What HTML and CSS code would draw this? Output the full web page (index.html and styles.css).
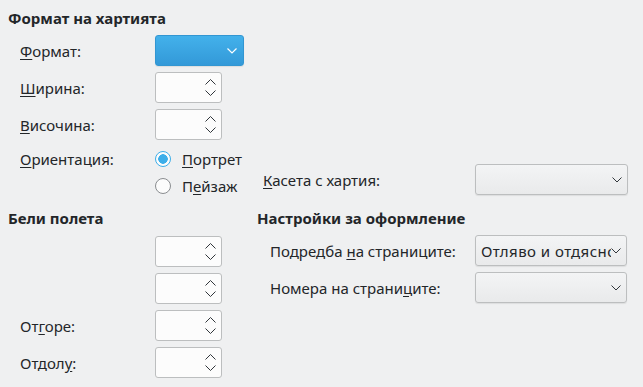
FILE: index.html
```html
<!DOCTYPE html>
<html lang="bg">
<head>
<meta charset="utf-8">
<link rel="stylesheet" href="styles.css">
</head>
<body>
<div class="page">
  <div class="sec-title">Формат на хартията</div>
  <div class="top">
    <div class="form">
      <div class="row">
        <span class="label"><u>Ф</u>ормат:</span>
        <div class="combo blue"><svg class="chev" width="10" height="6" viewBox="0 0 10 6"><path d="M0.5 0.5 L5 5 L9.5 0.5" fill="none" stroke="#fff" stroke-width="1.2"/></svg></div>
      </div>
      <div class="row">
        <span class="label"><u>Ш</u>ирина:</span>
        <div class="spin"><svg width="11" height="17" viewBox="0 0 11 17"><path d="M0.5 5.5 L5.5 0.5 L10.5 5.5 M0.5 11.5 L5.5 16.5 L10.5 11.5" fill="none" stroke="#31363b" stroke-width="1"/></svg></div>
      </div>
      <div class="row">
        <span class="label"><u>В</u>исочина:</span>
        <div class="spin"><svg width="11" height="17" viewBox="0 0 11 17"><path d="M0.5 5.5 L5.5 0.5 L10.5 5.5 M0.5 11.5 L5.5 16.5 L10.5 11.5" fill="none" stroke="#31363b" stroke-width="1"/></svg></div>
      </div>
      <div class="rrow first">
        <span class="label"><u>О</u>риентация:</span>
        <span class="radio checked"></span><span class="rlabel"><u>П</u>ортрет</span>
      </div>
      <div class="rrow">
        <span class="label"></span>
        <span class="radio"></span><span class="rlabel">П<u>е</u>йзаж</span>
      </div>
    </div>
    <div class="tray">
      <span class="tlabel"><u>К</u>асета с хартия:</span>
      <div class="combo"><svg class="chev" width="10" height="6" viewBox="0 0 10 6"><path d="M0.5 0.5 L5 5 L9.5 0.5" fill="none" stroke="#31363b" stroke-width="1"/></svg></div>
    </div>
  </div>
  <div class="bottom">
    <div class="margins">
      <div class="sec-title">Бели полета</div>
      <div class="mrows">
        <div class="row">
          <span class="label"></span>
          <div class="spin"><svg width="11" height="17" viewBox="0 0 11 17"><path d="M0.5 5.5 L5.5 0.5 L10.5 5.5 M0.5 11.5 L5.5 16.5 L10.5 11.5" fill="none" stroke="#31363b" stroke-width="1"/></svg></div>
        </div>
        <div class="row">
          <span class="label"></span>
          <div class="spin"><svg width="11" height="17" viewBox="0 0 11 17"><path d="M0.5 5.5 L5.5 0.5 L10.5 5.5 M0.5 11.5 L5.5 16.5 L10.5 11.5" fill="none" stroke="#31363b" stroke-width="1"/></svg></div>
        </div>
        <div class="row">
          <span class="label">От<u>г</u>оре:</span>
          <div class="spin"><svg width="11" height="17" viewBox="0 0 11 17"><path d="M0.5 5.5 L5.5 0.5 L10.5 5.5 M0.5 11.5 L5.5 16.5 L10.5 11.5" fill="none" stroke="#31363b" stroke-width="1"/></svg></div>
        </div>
        <div class="row">
          <span class="label">Отдол<u>у</u>:</span>
          <div class="spin"><svg width="11" height="17" viewBox="0 0 11 17"><path d="M0.5 5.5 L5.5 0.5 L10.5 5.5 M0.5 11.5 L5.5 16.5 L10.5 11.5" fill="none" stroke="#31363b" stroke-width="1"/></svg></div>
        </div>
      </div>
    </div>
    <div class="layout">
      <div class="sec-title">Настройки за оформление</div>
      <div class="lrows">
        <div class="row">
          <span class="llabel">Подредба <u>н</u>а страниците:</span>
          <div class="combo"><span class="ctext">Отляво и отдясно</span><svg class="chev" width="10" height="6" viewBox="0 0 10 6"><path d="M0.5 0.5 L5 5 L9.5 0.5" fill="none" stroke="#31363b" stroke-width="1"/></svg></div>
        </div>
        <div class="row">
          <span class="llabel">Номера на страни<u>ц</u>ите:</span>
          <div class="combo"><svg class="chev" width="10" height="6" viewBox="0 0 10 6"><path d="M0.5 0.5 L5 5 L9.5 0.5" fill="none" stroke="#31363b" stroke-width="1"/></svg></div>
        </div>
      </div>
    </div>
  </div>
</div>
</body>
</html>
```
FILE: styles.css
```css
html, body {
  margin: 0;
  padding: 0;
  background: #eff0f1;
}
body {
  font-family: "Noto Sans", "DejaVu Sans", sans-serif;
  font-size: 15px;
  color: #232629;
  width: 643px;
  height: 387px;
  overflow: hidden;
}
u {
  text-decoration: underline;
  text-underline-offset: 2px;
}
.page {
  padding: 9px 0 0 8px;
}
.sec-title {
  font-weight: bold;
  line-height: 18px;
  height: 18px;
}
.top {
  display: flex;
  align-items: flex-end;
  margin-top: 8px;
}
.form {
  width: 255px;
  display: flex;
  flex-direction: column;
}
.row {
  display: flex;
  align-items: center;
  height: 31px;
  margin-bottom: 6px;
}
.label {
  width: 135px;
  padding-left: 12px;
  flex: none;
}
.combo {
  height: 31px;
  box-sizing: border-box;
  border: 1px solid #bcbebf;
  border-radius: 3px;
  background: linear-gradient(#f3f4f5, #e9eaeb);
  box-shadow: 0 1px 1px rgba(0,0,0,0.08);
  display: flex;
  align-items: center;
  justify-content: flex-end;
  padding-right: 5px;
  position: relative;
  width: 153px;
}
.combo.blue {
  width: 89px;
  border-color: #3296d2;
  background: linear-gradient(#43b1eb, #3399d8);
  padding-right: 6px;
}
.spin {
  width: 67px;
  height: 31px;
  box-sizing: border-box;
  border: 1px solid #bcbebf;
  border-radius: 3px;
  background: #fcfcfc;
  display: flex;
  align-items: center;
  justify-content: flex-end;
  padding-right: 5px;
}
.rrow {
  display: flex;
  align-items: center;
  height: 22px;
}
.rrow.first {
  margin-top: 2px;
  margin-bottom: 5px;
}
.radio {
  width: 16px;
  height: 16px;
  box-sizing: border-box;
  border-radius: 50%;
  border: 1px solid #8a8d90;
  background: #fcfcfc;
  margin-right: 11px;
  flex: none;
}
.radio.checked {
  border: 1.5px solid #3daee9;
  background: radial-gradient(circle, #3daee9 0 4.5px, #fcfcfc 5px);
}
.tray {
  display: flex;
  align-items: center;
  margin-bottom: 2px;
}
.tlabel {
  width: 212px;
}
.bottom {
  display: flex;
  margin-top: 12px;
}
.margins {
  width: 249px;
}
.mrows {
  margin-top: 9px;
}
.mrows .row {
  margin-bottom: 6px;
}
.layout {
  width: 370px;
}
.lrows {
  margin-top: 8px;
}
.llabel {
  width: 205px;
  padding-left: 13px;
  flex: none;
}
.ctext {
  position: absolute;
  left: 5px;
  right: 15px;
  white-space: nowrap;
  overflow: hidden;
  letter-spacing: 0.45px;
}
.chev {
  flex: none;
}
```
